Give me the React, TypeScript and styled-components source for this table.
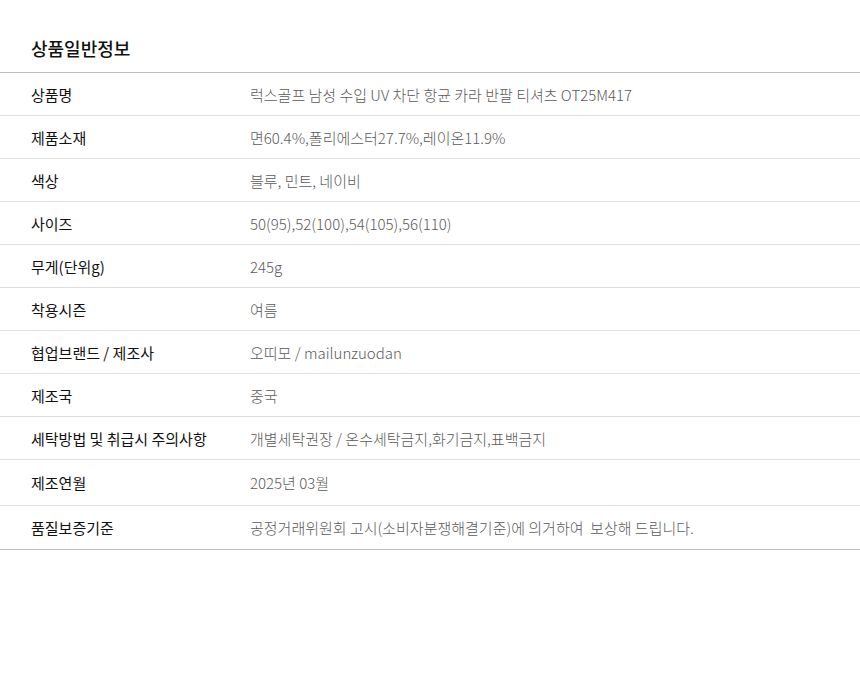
import React from "react";
import styled, { createGlobalStyle } from "styled-components";

const Global = createGlobalStyle`
  html, body { margin: 0; padding: 0; background: #fff; }
  body { font-family: "Noto Sans CJK KR", "Noto Sans", sans-serif; }
`;

const Page = styled.div`
  width: 860px;
  padding-top: 36px;
`;

const Title = styled.h2`
  margin: 0;
  padding: 0 31px;
  height: 36px;
  font-size: 18px;
  line-height: 24px;
  font-weight: 500;
  color: #111;
`;

const Table = styled.div`
  display: grid;
  grid-template-columns: 250px 1fr;
  border-top: 1px solid #bdbdbd;
  border-bottom: 1px solid #bdbdbd;
`;

const Row = styled.div<{ $h: number; $last?: boolean }>`
  display: contents;
  & > div {
    height: ${(p) => p.$h}px;
    border-bottom: ${(p) => (p.$last ? "none" : "1px solid #e0e0e0")};
  }
`;

const Label = styled.div`
  display: flex;
  align-items: center;
  padding-left: 31px;
  font-size: 15px;
  font-weight: 400;
  color: #111;
  white-space: nowrap;
`;

const Value = styled.div`
  display: flex;
  align-items: center;
  font-size: 15px;
  font-weight: 300;
  color: #5a5a5a;
  white-space: pre;
`;

const rows: [string, string, number][] = [
  ["상품명", "럭스골프 남성 수입 UV 차단 항균 카라 반팔 티셔츠 OT25M417", 42],
  ["제품소재", "면60.4%,폴리에스터27.7%,레이온11.9%", 42],
  ["색상", "블루, 민트, 네이비", 42],
  ["사이즈", "50(95),52(100),54(105),56(110)", 42],
  ["무게(단위g)", "245g", 42],
  ["착용시즌", "여름", 42],
  ["협업브랜드 / 제조사", "오띠모 / mailunzuodan", 42],
  ["제조국", "중국", 42],
  ["세탁방법 및 취급시 주의사항", "개별세탁권장 / 온수세탁금지,화기금지,표백금지", 42],
  ["제조연월", "2025년 03월", 45],
  ["품질보증기준", "공정거래위원회 고시(소비자분쟁해결기준)에 의거하여  보상해 드립니다.", 43],
];

export default function App() {
  return (
    <Page>
      <Global />
      <Title>상품일반정보</Title>
      <Table>
        {rows.map(([k, v, h], i) => (
          <Row key={k} $h={h} $last={i === rows.length - 1}>
            <Label>{k}</Label>
            <Value>{v}</Value>
          </Row>
        ))}
      </Table>
    </Page>
  );
}
